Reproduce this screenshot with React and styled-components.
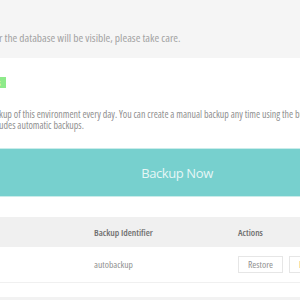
import React from "react";
import styled, { createGlobalStyle } from "styled-components";

const Global = createGlobalStyle`
  html, body { margin: 0; padding: 0; background: #ffffff; }
  body { font-family: "Open Sans", "Liberation Sans", sans-serif; font-stretch: 75%; overflow: hidden; }
`;

const Page = styled.div`
  width: 300px;
  height: 300px;
  overflow: hidden;
  background: #ffffff;
`;

const Notice = styled.div`
  height: 58px;
  background: #f5f5f5;
  box-sizing: border-box;
  padding-top: 32px;
  font-size: 11.4px;
  line-height: 12px;
  color: #a3a3a3;
  white-space: nowrap;
  margin-left: -1px;
`;

const Section = styled.div`
  padding-top: 19px;
`;

const Badge = styled.span`
  display: block;
  width: 6px;
  height: 11px;
  background: #8eea8a;
  overflow: hidden;
  color: #e8ffe6;
  font-size: 8px;
  line-height: 11px;
  text-indent: -2px;
`;

const Description = styled.p`
  margin: 21px 0 0 -1px;
  font-size: 9.95px;
  line-height: 11px;
  color: #8f8f8f;
  white-space: nowrap;
`;

const BackupButton = styled.button`
  display: flex;
  align-items: center;
  justify-content: center;
  box-sizing: border-box;
  margin: 17px 0 0 -10px;
  width: 330px;
  height: 49px;
  padding: 0 0 0 44px;
  background: #77d0ce;
  border: 1px solid #c9ecea;
  color: #e6f6f6;
  font-family: "Open Sans", "Liberation Sans", sans-serif;
  font-stretch: 100%;
  font-size: 13px;
  letter-spacing: -0.4px;
`;

const Table = styled.div`
  margin-top: 20px;
`;

const HeaderRow = styled.div`
  display: grid;
  grid-template-columns: 94px 144px 1fr;
  align-items: center;
  height: 30px;
  background: #f0f0f0;
  font-size: 9.4px;
  font-weight: 600;
  color: #6e6e6e;
`;

const Row = styled.div`
  display: grid;
  grid-template-columns: 94px 144px 1fr;
  align-items: center;
  height: 35px;
  border-bottom: 1px solid #f0f0f0;
  font-size: 9.6px;
  color: #8f8f8f;
`;

const Actions = styled.div`
  display: flex;
  gap: 6px;
  white-space: nowrap;
`;

const ActionButton = styled.button`
  flex: none;
  height: 17px;
  padding: 0 9px;
  background: #ffffff;
  border: 1px solid #e6e6e6;
  font-family: "Open Sans", "Liberation Sans", sans-serif;
  font-stretch: 75%;
  font-size: 9.6px;
  color: ${(p) => p.$color || "#8f8f8f"};
`;

const Footer = styled.div`
  margin-top: 14px;
  height: 20px;
  background: #f2f2f2;
`;

export default function App() {
  return (
    <Page>
      <Global />
      <Notice>r the database will be visible, please take care.</Notice>
      <Section>
        <Badge>s</Badge>
        <Description>
          kup of this environment every day. You can create a manual backup any time using the button below.
          <br />
          udes automatic backups.
        </Description>
        <BackupButton>Backup Now</BackupButton>
      </Section>
      <Table>
        <HeaderRow>
          <span />
          <span>Backup Identifier</span>
          <span>Actions</span>
        </HeaderRow>
        <Row>
          <span />
          <span>autobackup</span>
          <Actions>
            <ActionButton>Restore</ActionButton>
            <ActionButton $color="#e8b070">Delete</ActionButton>
          </Actions>
        </Row>
      </Table>
      <Footer />
    </Page>
  );
}
